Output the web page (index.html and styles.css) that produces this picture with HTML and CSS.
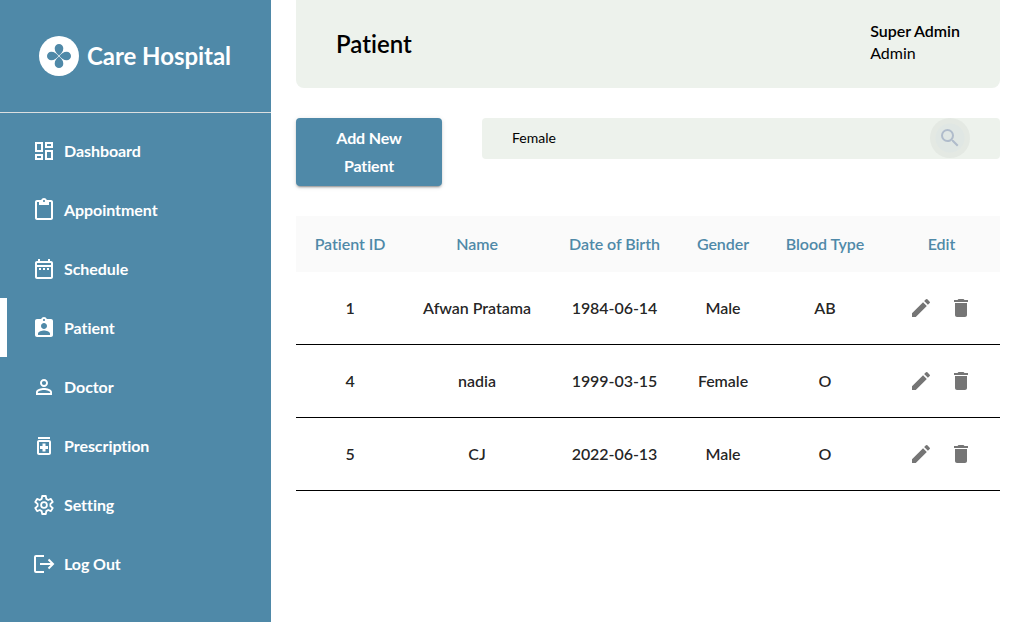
FILE: index.html
```html
<!DOCTYPE html>
<html lang="en">
<head>
<meta charset="utf-8">
<title>Care Hospital</title>
<link rel="stylesheet" href="styles.css">
</head>
<body>
<svg width="0" height="0" class="sprite" aria-hidden="true">
  <symbol id="pencil" viewBox="0 0 24 24"><path d="M3 17.25V21h3.75L17.81 9.94l-3.75-3.75L3 17.25zM20.71 7.04a1 1 0 0 0 0-1.41l-2.34-2.34a1 1 0 0 0-1.41 0l-1.83 1.83 3.75 3.75 1.83-1.83z"/></symbol>
  <symbol id="trash" viewBox="0 0 24 24"><path d="M6 19c0 1.1.9 2 2 2h8c1.100 0 2-.9 2-2V7H6v12zM19 4h-3.500l-1-1h-5l-1 1H5v2h14V4z"/></symbol>
</svg>
<div class="app">
  <aside class="sidebar">
    <div class="brand">
      <svg class="logo" viewBox="0 0 40 40"><circle cx="20" cy="20" r="20" fill="#fff"/><g fill="#4f89a8"><path id="petal" d="M20 19.600C17.500 17.400 15.700 15.500 15.700 12.300A4.300 4.300 0 0 1 24.300 12.300C24.300 15.500 22.500 17.400 20 19.600Z"/><use href="#petal" transform="rotate(90 20 20)"/><use href="#petal" transform="rotate(180 20 20)"/><use href="#petal" transform="rotate(270 20 20)"/></g></svg>
      <span class="brand-name">Care Hospital</span>
    </div>
    <nav class="menu">
      <a class="item"><svg viewBox="0 0 24 24"><path d="M19 5v2h-4V5h4M9 5v6H5V5h4m10 8v6h-4v-6h4M9 17v2H5v-2h4M21 3h-8v6h8V3zM11 3H3v10h8V3zm10 8h-8v10h8V11zm-10 4H3v6h8v-6z"/></svg><span>Dashboard</span></a>
      <a class="item"><svg viewBox="0 0 24 24"><path d="M19 2h-4.180C14.400.84 13.300 0 12 0S9.600.84 9.180 2H5c-1.100 0-2 .9-2 2v16c0 1.100.9 2 2 2h14c1.100 0 2-.9 2-2V4c0-1.100-.9-2-2-2zm-7 0c.55 0 1 .45 1 1s-.45 1-1 1-1-.45-1-1 .45-1 1-1zm7 18H5V4h2v3h10V4h2v16z"/></svg><span>Appointment</span></a>
      <a class="item"><svg viewBox="0 0 24 24"><path d="M7 11h2v2H7zm4 0h2v2h-2zm4 0h2v2h-2z"/><path d="M19 4h-1V2h-2v2H8V2H6v2H5c-1.100 0-2 .9-2 2v14c0 1.100.9 2 2 2h14c1.100 0 2-.9 2-2V6c0-1.100-.9-2-2-2zm0 16H5V10h14v10zm0-12H5V6h14v2z"/></svg><span>Schedule</span></a>
      <a class="item active"><svg viewBox="0 0 24 24"><path d="M19 3h-4.180C14.400 1.840 13.300 1 12 1s-2.400.84-2.820 2H5c-1.100 0-2 .9-2 2v14c0 1.100.9 2 2 2h14c1.100 0 2-.9 2-2V5c0-1.100-.9-2-2-2zm-7 0c.55 0 1 .45 1 1s-.45 1-1 1-1-.45-1-1 .45-1 1-1zm0 4c1.660 0 3 1.340 3 3s-1.340 3-3 3-3-1.340-3-3 1.340-3 3-3zm6 12H6v-1.400c0-2 4-3.100 6-3.100s6 1.100 6 3.100V19z"/></svg><span>Patient</span></a>
      <a class="item"><svg viewBox="0 0 24 24"><path d="M12 5.900a2.100 2.100 0 1 1 0 4.200 2.100 2.100 0 0 1 0-4.200m0 9c2.970 0 6.100 1.460 6.100 2.100v1.100H5.900V17c0-.64 3.130-2.100 6.100-2.100M12 4C9.790 4 8 5.790 8 8s1.790 4 4 4 4-1.790 4-4-1.790-4-4-4zm0 9c-2.670 0-8 1.340-8 4v3h16v-3c0-2.660-5.330-4-8-4z"/></svg><span>Doctor</span></a>
      <a class="item"><svg viewBox="0 0 24 24"><path d="M6 3h12v2H6zm11 3H7c-1.100 0-2 .9-2 2v11c0 1.100.9 2 2 2h10c1.100 0 2-.9 2-2V8c0-1.100-.9-2-2-2zm0 13H7V8h10v11z"/><path d="M10.500 9.500h3v2.500H16v3h-2.500v2.500h-3V15H8v-3h2.500z"/></svg><span>Prescription</span></a>
      <a class="item"><svg viewBox="0 0 24 24"><path class="gear" d="M10.200 3H13.800L14.300 5.900L16.200 7L18.900 5.900L20.700 9L18.400 10.900V13.100L20.700 15L18.900 18.100L16.200 17L14.300 18.100L13.800 21H10.200L9.700 18.100L7.800 17L5.100 18.100L3.300 15L5.600 13.100V10.900L3.300 9L5.100 5.900L7.800 7L9.700 5.900Z"/><circle class="gear" cx="12" cy="12" r="2.900"/></svg><span>Setting</span></a>
      <a class="item"><svg viewBox="0 0 24 24"><path class="line" d="M12 3.900H4Q3 3.900 3 4.900V19.100Q3 20.100 4 20.100H12M8 12H20.800M16.500 7.500L21 12L16.500 16.500"/></svg><span>Log Out</span></a>
    </nav>
  </aside>
  <main class="content">
    <header class="topbar">
      <h1>Patient</h1>
      <div class="user"><b>Super Admin</b><span>Admin</span></div>
    </header>
    <div class="actions">
      <button class="add">Add New Patient</button>
      <div class="search">
        <span class="query">Female</span>
        <button class="search-btn" aria-label="Search"><svg viewBox="0 0 24 24"><path d="M15.500 14h-.79l-.28-.27A6.470 6.470 0 0 0 16 9.500 6.500 6.500 0 1 0 9.500 16c1.610 0 3.090-.59 4.230-1.570l.27.280v.79l5 4.990L20.490 19l-4.990-5zm-6 0a4.500 4.500 0 1 1 0-9 4.500 4.500 0 0 1 0 9z"/></svg></button>
      </div>
    </div>
    <table class="patients">
      <colgroup><col class="c-id"><col class="c-name"><col class="c-dob"><col class="c-gender"><col class="c-blood"><col class="c-edit"></colgroup>
      <thead><tr><th>Patient ID</th><th>Name</th><th>Date of Birth</th><th>Gender</th><th>Blood Type</th><th>Edit</th></tr></thead>
      <tbody>
        <tr><td>1</td><td>Afwan Pratama</td><td>1984-06-14</td><td>Male</td><td>AB</td><td class="edit"><div class="tools"><svg><use href="#pencil"/></svg><svg><use href="#trash"/></svg></div></td></tr>
        <tr><td>4</td><td>nadia</td><td>1999-03-15</td><td>Female</td><td>O</td><td class="edit"><div class="tools"><svg><use href="#pencil"/></svg><svg><use href="#trash"/></svg></div></td></tr>
        <tr><td>5</td><td>CJ</td><td>2022-06-13</td><td>Male</td><td>O</td><td class="edit"><div class="tools"><svg><use href="#pencil"/></svg><svg><use href="#trash"/></svg></div></td></tr>
      </tbody>
    </table>
  </main>
</div>
</body>
</html>
```
FILE: styles.css
```css
* { box-sizing: border-box; }
body { margin: 0; font-family: Lato, sans-serif; font-size: 16px; color: #000; background: #fff; overflow: hidden; font-variant-ligatures: none; }
.sprite { display: none; }
.app { display: flex; height: 622px; }

.sidebar { width: 271px; flex: none; background: #4f89a8; color: #fff; }
.brand { height: 113px; padding: 0 0 1px 39px; border-bottom: 1px solid #dcdfe0; display: flex; align-items: center; gap: 8px; }
.logo { width: 40px; height: 40px; }
.brand-name { font-size: 24px; font-weight: 700; letter-spacing: -0.04px; line-height: 32px; }
.menu { padding-top: 8px; }
.item { display: flex; align-items: center; gap: 8px; height: 59px; padding-left: 32px; font-weight: 700; letter-spacing: -0.06px; }
.item svg { width: 24px; height: 24px; fill: #fff; }
.item .line { fill: none; stroke: #fff; stroke-width: 2; }
.item .gear { fill: none; stroke: #fff; stroke-width: 1.8; stroke-linejoin: round; }
.item.active { border-left: 7px solid #fff; padding-left: 25px; }

.content { flex: 1; padding: 0 24px 0 25px; }
.topbar { height: 88px; padding: 0 40px; background: #edf2ec; border-radius: 0 0 8px 8px; display: flex; justify-content: space-between; align-items: center; }
.topbar h1 { margin: 0; font-size: 24px; font-weight: 600; letter-spacing: 0; line-height: 32px; }
.user { display: flex; flex-direction: column; line-height: 22px; padding-bottom: 5px; }
.user b { font-weight: 600; letter-spacing: -0.03px; }
.user span { font-weight: 400; }

.actions { display: flex; align-items: flex-start; gap: 40px; margin-top: 30px; }
.add { width: 146px; height: 68px; padding: 6px 16px; border: 0; border-radius: 4px; background: #4f89a8; color: #fff; font: 700 16px/28px Lato, sans-serif; font-variant-ligatures: none; letter-spacing: -0.15px; box-shadow: 0 3px 1px -2px rgba(0,0,0,.2), 0 2px 2px 0 rgba(0,0,0,.14), 0 1px 5px 0 rgba(0,0,0,.12); }
.search { flex: 1; height: 41px; padding: 0 30px 1px; border-radius: 4px; background: #edf2ec; display: flex; align-items: center; justify-content: space-between; font-size: 14px; }
.query { padding-bottom: 1px; }
.search-btn { width: 40px; height: 40px; padding: 0; border: 0; border-radius: 50%; background: radial-gradient(circle, #e0e7e4 0 14px, #e4e9e3 15px); display: grid; place-items: center; }
.search-btn svg { width: 24px; height: 24px; fill: #b0bccb; }

.patients { width: 704px; margin-top: 30px; table-layout: fixed; border-collapse: separate; border-spacing: 0; text-align: center; font-weight: 600; letter-spacing: -0.05px; }
.c-id { width: 108px; }
.c-name { width: 146px; }
.c-dob { width: 129px; }
.c-gender { width: 88px; }
.c-blood { width: 116px; }
.c-edit { width: 117px; }
th { height: 56px; padding: 0 0 2px; background: #fafafa; color: #4f89a8; font-weight: 600; }
td { height: 73px; padding: 0 0 2px; border-bottom: 1px solid #000; color: rgba(0,0,0,.87); }
.edit { padding: 0 1px 0 0; }
.tools { display: flex; justify-content: center; gap: 16px; }
.tools svg { width: 24px; height: 24px; fill: #757575; }
```
